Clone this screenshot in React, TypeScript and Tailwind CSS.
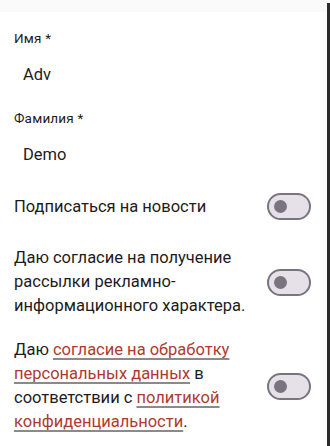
import React from 'react';

function Toggle() {
  return (
    <div className="flex h-[27px] w-[44px] shrink-0 items-center rounded-full border-2 border-[#79747e] bg-[#e6e0e9]">
      <div className="ml-[5px] h-[13px] w-[13px] rounded-full bg-[#79747e]" />
    </div>
  );
}

function Link({ children }: { children: React.ReactNode }) {
  return (
    <span className="text-[#b03a2e] underline decoration-[#8a8a8a] decoration-[1.5px] underline-offset-[3px] [text-decoration-skip-ink:none]">
      {children}
    </span>
  );
}

export default function App() {
  return (
    <div
      className="flex h-[446px] w-[330px] bg-white text-[#1d1b20]"
      style={{ fontFamily: 'Roboto, "Noto Sans", sans-serif' }}
    >
      <div className="flex flex-1 flex-col">
        <div className="h-3 bg-[#fafafa]" />
        <div className="flex flex-col pl-[14px] pr-[16px]">
          <label className="mt-[18px] text-[13.5px] leading-4 tracking-[0.2px]">Имя *</label>
          <div className="mt-[17px] pl-[9px] text-[16.5px] leading-6">Adv</div>
          <label className="mt-[23px] text-[13.5px] leading-4 tracking-[0.2px]">Фамилия *</label>
          <div className="mt-[17px] pl-[9px] text-[16.5px] leading-6">Demo</div>

          <div className="mt-[26px] flex items-center justify-between">
            <p className="w-[240px] text-[16.5px] leading-6">Подписаться на новости</p>
            <Toggle />
          </div>

          <div className="mt-[26px] flex items-center justify-between">
            <p className="w-[240px] text-[16.5px] leading-6">
              Даю согласие на получение рассылки рекламно-информационного характера.
            </p>
            <Toggle />
          </div>

          <div className="mt-[20px] flex items-center justify-between">
            <p className="w-[240px] text-[16.5px] leading-6">
              Даю <Link>согласие на обработку персональных данных</Link> в соответствии с{' '}
              <Link>политикой конфиденциальности</Link>.
            </p>
            <Toggle />
          </div>
        </div>
      </div>
      <div className="flex w-[3px] flex-col">
        <div className="h-[3px] bg-[#fafafa]" />
        <div className="flex-1 bg-[#2b2b2b]" />
      </div>
    </div>
  );
}
